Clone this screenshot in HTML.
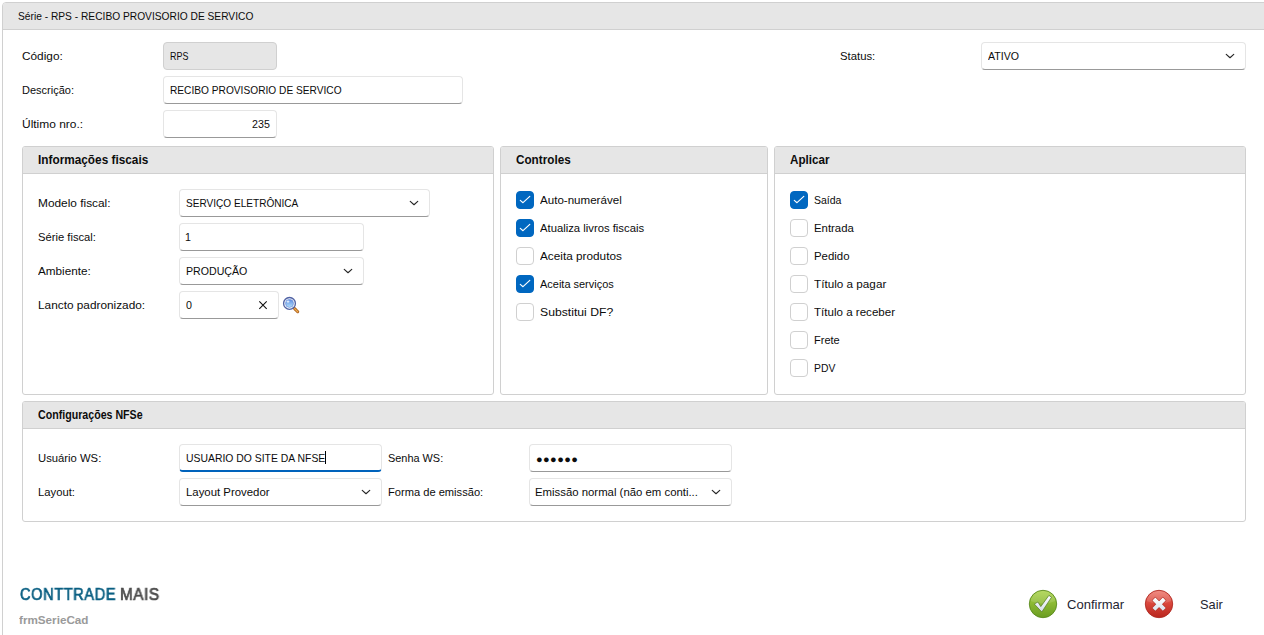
<!DOCTYPE html>
<html lang="pt-BR">
<head>
<meta charset="utf-8">
<title>Série - RPS</title>
<style>
html,body{margin:0;padding:0;}
body{width:1264px;height:635px;overflow:hidden;background:#fff;position:relative;font-family:"Liberation Sans",sans-serif;font-size:12px;color:#1a1a1a;}
.abs{position:absolute;box-sizing:border-box;}
.t{position:absolute;white-space:pre;transform-origin:0 0;}
.frame{left:2px;top:2px;width:1300px;height:700px;border:1px solid #d0d0d0;border-radius:4px 0 0 0;}
.fhead{left:3px;top:3px;width:1300px;height:27px;background:#e6e6e6;border-bottom:1px solid #d0d0d0;border-radius:3px 0 0 0;}
.panel{border:1px solid #d0d0d0;border-radius:3px;background:#fff;overflow:hidden;}
.phead{left:0;top:0;right:0;height:27px;background:#e6e6e6;border-bottom:1px solid #d0d0d0;}
.inp{border:1px solid #e5e5e5;border-bottom-color:#999999;border-radius:4px;background:#fff;height:28px;}
.inp.dis{background:#e6e6e6;border-color:#d0d0d0;}
.inp.foc{border-bottom:2px solid #0063bc;}
.cb{width:18px;height:18px;border-radius:4px;border:1px solid #d0d0d0;background:#fff;}
.cb.on{background:#0067c0;border-color:#0067c0;}
svg{position:absolute;overflow:visible;}
</style>
</head>
<body>
<div class="abs frame"></div>
<div class="abs fhead"></div>

<!-- top fields -->
<div class="abs inp dis" style="left:163px;top:42px;width:114px;"></div>
<div class="abs inp" style="left:163px;top:76px;width:300px;"></div>
<div class="abs inp" style="left:163px;top:110px;width:114px;"></div>
<div class="abs inp" style="left:981px;top:42px;width:265px;"></div>

<!-- panels -->
<div class="abs panel" style="left:22px;top:146px;width:472px;height:249px;"><div class="abs phead"></div></div>
<div class="abs panel" style="left:500px;top:146px;width:268px;height:249px;"><div class="abs phead"></div></div>
<div class="abs panel" style="left:774px;top:146px;width:472px;height:249px;"><div class="abs phead"></div></div>
<div class="abs panel" style="left:22px;top:401px;width:1224px;height:121px;"><div class="abs phead"></div></div>

<!-- panel 1 fields -->
<div class="abs inp" style="left:179px;top:189px;width:251px;"></div>
<div class="abs inp" style="left:179px;top:223px;width:185px;"></div>
<div class="abs inp" style="left:179px;top:257px;width:185px;"></div>
<div class="abs inp" style="left:179px;top:291px;width:100px;"></div>

<!-- panel 4 fields -->
<div class="abs inp foc" style="left:179px;top:444px;width:203px;"></div>
<div class="abs inp" style="left:179px;top:478px;width:203px;"></div>
<div class="abs inp" style="left:529px;top:444px;width:203px;"></div>
<div class="abs inp" style="left:529px;top:478px;width:203px;"></div>

<!-- checkboxes -->
<div class="abs cb on" style="left:516px;top:191px;"></div>
<div class="abs cb on" style="left:516px;top:219px;"></div>
<div class="abs cb" style="left:516px;top:247px;"></div>
<div class="abs cb on" style="left:516px;top:275px;"></div>
<div class="abs cb" style="left:516px;top:303px;"></div>

<div class="abs cb on" style="left:790px;top:191px;"></div>
<div class="abs cb" style="left:790px;top:219px;"></div>
<div class="abs cb" style="left:790px;top:247px;"></div>
<div class="abs cb" style="left:790px;top:275px;"></div>
<div class="abs cb" style="left:790px;top:303px;"></div>
<div class="abs cb" style="left:790px;top:331px;"></div>
<div class="abs cb" style="left:790px;top:359px;"></div>

<!-- icons -->
<svg width="1264" height="635" style="left:0;top:0" viewBox="0 0 1264 635">
  <defs>
    <linearGradient id="gg" x1="0" y1="0" x2="0" y2="1"><stop offset="0" stop-color="#acd44c"/><stop offset="0.5" stop-color="#8ab832"/><stop offset="1" stop-color="#6a9c22"/></linearGradient>
    <linearGradient id="gr" x1="0" y1="0" x2="0" y2="1"><stop offset="0" stop-color="#ee7b70"/><stop offset="0.5" stop-color="#d8453b"/><stop offset="1" stop-color="#b9261e"/></linearGradient>
    <linearGradient id="gl" x1="0" y1="0" x2="0" y2="1"><stop offset="0" stop-color="#5c8ce4"/><stop offset="1" stop-color="#b4e0fb"/></linearGradient>
  <linearGradient id="gw" x1="0" y1="0" x2="0" y2="1"><stop offset="0" stop-color="#ffffff"/><stop offset="1" stop-color="#d4dde8"/></linearGradient><linearGradient id="gw2" gradientUnits="userSpaceOnUse" x1="0" y1="598" x2="0" y2="611"><stop offset="0" stop-color="#ffffff"/><stop offset="1" stop-color="#d8e0ec"/></linearGradient>
  </defs>
  <!-- checks -->
  <g fill="none" stroke="#fff" stroke-width="1.15" stroke-linecap="round" stroke-linejoin="round">
    <path d="M520.3 200.4 L523.0 202.7 L529.8 196.3"/>
    <path d="M520.3 228.4 L523.0 230.7 L529.8 224.3"/>
    <path d="M520.3 284.4 L523.0 286.7 L529.8 280.3"/>
    <path d="M794.3 200.4 L797.0 202.7 L803.8 196.3"/>
  </g>
  <!-- chevrons -->
  <g fill="none" stroke="#262626" stroke-width="1.15" stroke-linecap="round" stroke-linejoin="round">
    <path d="M410.25 201.4 L414 204.75 L417.75 201.4"/>
    <path d="M344.25 269.4 L348 272.75 L351.75 269.4"/>
    <path d="M1226.25 54.4 L1230 57.75 L1233.75 54.4"/>
    <path d="M362.25 490.4 L366 493.75 L369.75 490.4"/>
    <path d="M712.25 490.4 L716 493.75 L719.75 490.4"/>
  </g>
  <!-- clear X -->
  <path d="M259.3 301.4 L266.7 308.8 M266.7 301.4 L259.3 308.8" stroke="#111" stroke-width="1.1" fill="none"/>
  <!-- magnifier -->
  <g>
    <path d="M294.6 308.6 L297.7 311.7" stroke="#a85a18" stroke-width="3" stroke-linecap="round"/>
    <path d="M294.6 308.6 L297.7 311.7" stroke="#f0b050" stroke-width="1.3" stroke-linecap="round"/>
    <circle cx="289.5" cy="303.4" r="5.9" fill="#fff" stroke="#5062a4" stroke-width="1.35"/>
    <circle cx="289.5" cy="303.4" r="4" fill="url(#gl)" stroke="#6b8fd8" stroke-width="0.7"/>
    <ellipse cx="288" cy="301.6" rx="1.5" ry="1.1" fill="#fff" opacity="0.75"/>
  </g>
  <!-- caret -->
  <rect x="325" y="451" width="1" height="13" fill="#000"/>
  <!-- confirm -->
  <circle cx="1043" cy="604" r="13.7" fill="url(#gg)" stroke="#5a8a1e" stroke-width="0.9"/>
  <path d="M1030.6 601 A12.6 12.6 0 0 1 1055.4 601 Q1043 606 1030.6 601 Z" fill="#fff" opacity="0.13"/>
  <path d="M1034.3 604.0 L1037.9 602.0 L1040.8 606.6 L1048.9 595.4 L1051.5 597.2 L1041.8 612.0 Z" fill="url(#gw)" stroke="#50781f" stroke-width="0.7" stroke-linejoin="round"/>
  <!-- exit -->
  <circle cx="1159" cy="604" r="13.7" fill="url(#gr)" stroke="#b02a22" stroke-width="0.9"/>
  <path d="M1146.6 601 A12.6 12.6 0 0 1 1171.4 601 Q1159 606 1146.6 601 Z" fill="#fff" opacity="0.13"/>
  <path d="M1153.55 598.65 L1164.65 609.75 M1164.65 598.65 L1153.55 609.75" stroke="#b02c23" stroke-width="5.1" stroke-linecap="butt"/>
  <path d="M1153.9 599.0 L1164.3 609.4 M1164.3 599.0 L1153.9 609.4" stroke="url(#gw2)" stroke-width="4.1" stroke-linecap="butt"/>
</svg>

<div class="t" style="left:536px;top:451px;font-size:11px;line-height:16px;letter-spacing:0.4px;color:#0c0c0c">●●●●●●</div>
<div class="t" style="left:18.00px;top:9.07px;font-size:11.5px;line-height:15.5px;font-weight:400;color:#0c0c0c;transform:scaleX(0.8881);">Série - RPS - RECIBO PROVISORIO DE SERVICO</div>
<div class="t" style="left:22.00px;top:49.07px;font-size:11.5px;line-height:15.5px;font-weight:400;color:#0c0c0c;transform:scaleX(1.0288);">Código:</div>
<div class="t" style="left:22.00px;top:83.07px;font-size:11.5px;line-height:15.5px;font-weight:400;color:#0c0c0c;transform:scaleX(0.9569);">Descrição:</div>
<div class="t" style="left:22.00px;top:117.07px;font-size:11.5px;line-height:15.5px;font-weight:400;color:#0c0c0c;transform:scaleX(1.0396);">Último nro.:</div>
<div class="t" style="left:170.00px;top:49.07px;font-size:11.5px;line-height:15.5px;font-weight:400;color:#0c0c0c;transform:scaleX(0.7752);">RPS</div>
<div class="t" style="left:170.00px;top:83.07px;font-size:11.5px;line-height:15.5px;font-weight:400;color:#0c0c0c;transform:scaleX(0.8841);">RECIBO PROVISORIO DE SERVICO</div>
<div class="t" style="left:252.00px;top:117.07px;font-size:11.5px;line-height:15.5px;font-weight:400;color:#0c0c0c;transform:scaleX(0.9289);">235</div>
<div class="t" style="left:840.00px;top:49.07px;font-size:11.5px;line-height:15.5px;font-weight:400;color:#0c0c0c;transform:scaleX(0.9840);">Status:</div>
<div class="t" style="left:988.00px;top:49.07px;font-size:11.5px;line-height:15.5px;font-weight:400;color:#0c0c0c;transform:scaleX(0.9226);">ATIVO</div>
<div class="t" style="left:38.00px;top:151.90px;font-size:12.4px;line-height:16.4px;font-weight:700;color:#0c0c0c;transform:scaleX(0.9529);">Informações fiscais</div>
<div class="t" style="left:516.00px;top:151.90px;font-size:12.4px;line-height:16.4px;font-weight:700;color:#0c0c0c;transform:scaleX(0.9452);">Controles</div>
<div class="t" style="left:790.00px;top:151.90px;font-size:12.4px;line-height:16.4px;font-weight:700;color:#0c0c0c;transform:scaleX(0.9383);">Aplicar</div>
<div class="t" style="left:38.00px;top:196.07px;font-size:11.5px;line-height:15.5px;font-weight:400;color:#0c0c0c;transform:scaleX(1.0316);">Modelo fiscal:</div>
<div class="t" style="left:38.00px;top:230.07px;font-size:11.5px;line-height:15.5px;font-weight:400;color:#0c0c0c;transform:scaleX(0.9750);">Série fiscal:</div>
<div class="t" style="left:38.00px;top:264.07px;font-size:11.5px;line-height:15.5px;font-weight:400;color:#0c0c0c;transform:scaleX(1.0194);">Ambiente:</div>
<div class="t" style="left:38.00px;top:298.07px;font-size:11.5px;line-height:15.5px;font-weight:400;color:#0c0c0c;transform:scaleX(1.0276);">Lancto padronizado:</div>
<div class="t" style="left:186.00px;top:196.07px;font-size:11.5px;line-height:15.5px;font-weight:400;color:#0c0c0c;transform:scaleX(0.8757);">SERVIÇO ELETRÔNICA</div>
<div class="t" style="left:185.00px;top:230.07px;font-size:11.5px;line-height:15.5px;font-weight:400;color:#0c0c0c;transform:scaleX(0.9300);">1</div>
<div class="t" style="left:186.00px;top:264.07px;font-size:11.5px;line-height:15.5px;font-weight:400;color:#0c0c0c;transform:scaleX(0.9233);">PRODUÇÃO</div>
<div class="t" style="left:186.00px;top:298.07px;font-size:11.5px;line-height:15.5px;font-weight:400;color:#0c0c0c;transform:scaleX(0.9300);">0</div>
<div class="t" style="left:540.00px;top:193.07px;font-size:11.5px;line-height:15.5px;font-weight:400;color:#0c0c0c;transform:scaleX(1.0066);">Auto-numerável</div>
<div class="t" style="left:540.00px;top:221.07px;font-size:11.5px;line-height:15.5px;font-weight:400;color:#0c0c0c;transform:scaleX(0.9808);">Atualiza livros fiscais</div>
<div class="t" style="left:540.00px;top:249.07px;font-size:11.5px;line-height:15.5px;font-weight:400;color:#0c0c0c;transform:scaleX(1.0249);">Aceita produtos</div>
<div class="t" style="left:540.00px;top:277.07px;font-size:11.5px;line-height:15.5px;font-weight:400;color:#0c0c0c;transform:scaleX(0.9535);">Aceita serviços</div>
<div class="t" style="left:540.00px;top:305.07px;font-size:11.5px;line-height:15.5px;font-weight:400;color:#0c0c0c;transform:scaleX(1.0617);">Substitui DF?</div>
<div class="t" style="left:814.00px;top:193.07px;font-size:11.5px;line-height:15.5px;font-weight:400;color:#0c0c0c;transform:scaleX(0.9141);">Saída</div>
<div class="t" style="left:814.00px;top:221.07px;font-size:11.5px;line-height:15.5px;font-weight:400;color:#0c0c0c;transform:scaleX(0.9874);">Entrada</div>
<div class="t" style="left:814.00px;top:249.07px;font-size:11.5px;line-height:15.5px;font-weight:400;color:#0c0c0c;transform:scaleX(0.9924);">Pedido</div>
<div class="t" style="left:814.00px;top:277.07px;font-size:11.5px;line-height:15.5px;font-weight:400;color:#0c0c0c;transform:scaleX(1.0189);">Título a pagar</div>
<div class="t" style="left:814.00px;top:305.07px;font-size:11.5px;line-height:15.5px;font-weight:400;color:#0c0c0c;transform:scaleX(1.0068);">Título a receber</div>
<div class="t" style="left:814.00px;top:333.07px;font-size:11.5px;line-height:15.5px;font-weight:400;color:#0c0c0c;transform:scaleX(0.9591);">Frete</div>
<div class="t" style="left:814.00px;top:361.07px;font-size:11.5px;line-height:15.5px;font-weight:400;color:#0c0c0c;transform:scaleX(0.9004);">PDV</div>
<div class="t" style="left:38.00px;top:406.90px;font-size:12.4px;line-height:16.4px;font-weight:700;color:#0c0c0c;transform:scaleX(0.8583);">Configurações NFSe</div>
<div class="t" style="left:38.00px;top:451.07px;font-size:11.5px;line-height:15.5px;font-weight:400;color:#0c0c0c;transform:scaleX(0.9801);">Usuário WS:</div>
<div class="t" style="left:38.00px;top:485.07px;font-size:11.5px;line-height:15.5px;font-weight:400;color:#0c0c0c;transform:scaleX(0.9787);">Layout:</div>
<div class="t" style="left:186.00px;top:451.07px;font-size:11.5px;line-height:15.5px;font-weight:400;color:#0c0c0c;transform:scaleX(0.9044);">USUARIO DO SITE DA NFSE</div>
<div class="t" style="left:186.00px;top:485.07px;font-size:11.5px;line-height:15.5px;font-weight:400;color:#0c0c0c;transform:scaleX(0.9898);">Layout Provedor</div>
<div class="t" style="left:388.00px;top:451.07px;font-size:11.5px;line-height:15.5px;font-weight:400;color:#0c0c0c;transform:scaleX(0.9484);">Senha WS:</div>
<div class="t" style="left:388.00px;top:485.07px;font-size:11.5px;line-height:15.5px;font-weight:400;color:#0c0c0c;transform:scaleX(0.9669);">Forma de emissão:</div>
<div class="t" style="left:535.00px;top:485.07px;font-size:11.5px;line-height:15.5px;font-weight:400;color:#0c0c0c;transform:scaleX(0.9880);">Emissão normal (não em conti...</div>
<div class="t" style="left:20.00px;top:585.26px;font-size:16px;line-height:20px;font-weight:400;color:#0a5f82;transform:scaleX(0.9086);-webkit-text-stroke:0.7px #0a5f82;letter-spacing:0.7px;will-change:transform;">CONTTRADE</div>
<div class="t" style="left:120.00px;top:584.59px;font-size:15.6px;line-height:19.6px;font-weight:400;color:#4c4c4c;transform:scaleX(0.9801);-webkit-text-stroke:0.7px #4c4c4c;letter-spacing:0.6px;will-change:transform;">MAIS</div>
<div class="t" style="left:19.00px;top:613.49px;font-size:11px;line-height:15px;font-weight:700;color:#9a9a9a;transform:scaleX(1.0622);">frmSerieCad</div>
<div class="t" style="left:1067.00px;top:596.30px;font-size:13px;line-height:17px;font-weight:400;color:#1e2430;transform:scaleX(1.0017);">Confirmar</div>
<div class="t" style="left:1200.00px;top:596.30px;font-size:13px;line-height:17px;font-weight:400;color:#1e2430;transform:scaleX(0.9844);">Sair</div>
</body>
</html>
